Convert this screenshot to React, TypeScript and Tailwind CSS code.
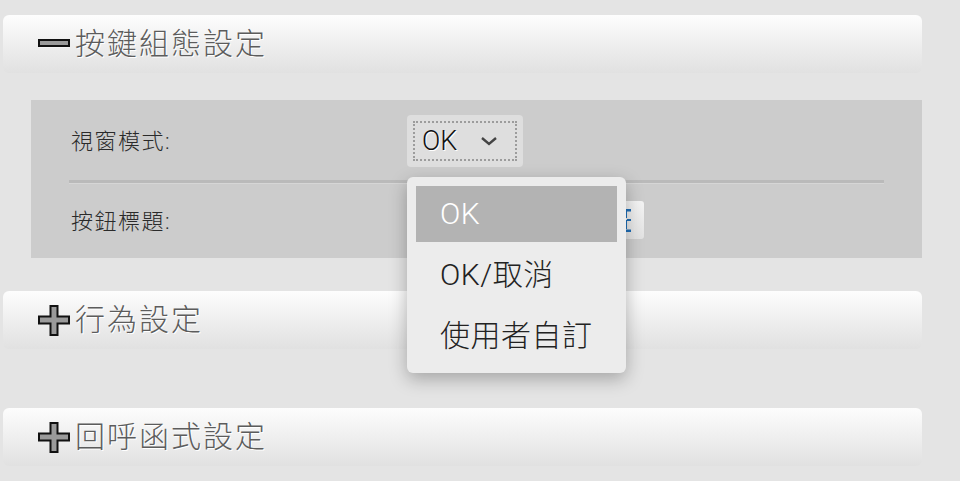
import React from 'react';

const font = 'font-[Roboto,"Noto_Sans_CJK_TC",sans-serif]';

const MinusIcon: React.FC = () => (
  <svg width="33" height="10" viewBox="0 0 33 10" className="shrink-0">
    <rect x="1.5" y="2.5" width="30" height="6" fill="#fff" opacity="0.8" />
    <rect x="1" y="1" width="30" height="6" fill="#9a9a9a" stroke="#111" strokeWidth="2" />
  </svg>
);

const PlusIcon: React.FC = () => (
  <svg width="33" height="33" viewBox="0 0 33 33" className="shrink-0">
    <polygon
      points="12.5,2 19.5,2 19.5,12.5 31,12.5 31,19.5 19.5,19.5 19.5,31 12.5,31 12.5,19.5 1,19.5 1,12.5 12.5,12.5"
      fill="#9a9a9a"
      stroke="#111"
      strokeWidth="2"
    />
  </svg>
);

const SectionHeader: React.FC<{ title: string; open?: boolean; className?: string }> = ({ title, open, className }) => (
  <div
    className={`ml-[3px] w-[919px] h-[58px] rounded-md bg-gradient-to-b from-[#fdfdfd] to-[#e1e1e1] flex items-center pl-[35px] gap-[4px] ${className ?? ''}`}
  >
    {open ? <MinusIcon /> : <PlusIcon />}
    <span className="text-[30px] font-light text-[#5c5c5c] tracking-[2px] leading-none [text-shadow:1px_1px_0_#fff]">
      {title}
    </span>
  </div>
);

const options = ['OK', 'OK/取消', '使用者自訂'];

export default function App() {
  return (
    <div className={`w-[960px] h-[481px] bg-[#e4e4e4] overflow-hidden relative ${font}`}>
      <div className="pt-[15px]">
        <SectionHeader title="按鍵組態設定" open />

        <div className="ml-[31px] mt-[27px] w-[891px] h-[158px] bg-[#cccccc] px-[38px]">
          <div className="h-[80px] flex items-center pl-[2px] pt-[2px]">
            <span className="w-[336px] text-[22px] font-light text-[#2a2a2a] tracking-[1.5px]">視窗模式:</span>
            <div className="w-[116px] h-[52px] rounded-[4px] bg-[#dedede] p-[6px]">
              <div className="h-full border-2 border-dotted border-[#9c9c9c] flex items-center pl-[7px] pr-[17px] justify-between">
                <span className="text-[27px] font-light text-[#111] leading-none [text-shadow:1px_1px_0_#fff]">OK</span>
                <svg width="18" height="10" viewBox="0 0 18 10">
                  <path d="M2 2 L9 8 L16 2" fill="none" stroke="#444" strokeWidth="2.4" />
                </svg>
              </div>
            </div>
          </div>

          <div className="border-t-[3px] border-[#bababa] border-b border-b-[#d6d6d6]" />

          <div className="h-[74px] flex items-center pl-[2px]">
            <span className="w-[336px] text-[22px] font-light text-[#2a2a2a] tracking-[1.5px]">按鈕標題:</span>
            <div className="ml-[183px] w-[54px] h-[38px] mt-[-2px] rounded-[3px] bg-gradient-to-b from-[#f4f4f4] to-[#e2e2e2] flex items-center justify-end pr-[12px]">
              <svg width="7" height="23" viewBox="0 0 7 23">
                <rect x="0" y="0" width="2" height="9" fill="#1f6fb8" />
                <rect x="0" y="11" width="2" height="9" fill="#1f6fb8" />
                <rect x="0" y="0" width="6" height="2.5" fill="#1f6fb8" />
                <rect x="2" y="10" width="4" height="2" fill="#1f6fb8" />
                <rect x="0" y="20.5" width="6" height="2.5" fill="#1f6fb8" />
              </svg>
            </div>
          </div>
        </div>

        <SectionHeader title="行為設定" className="mt-[33px]" />
        <SectionHeader title="回呼函式設定" className="mt-[59px]" />
      </div>

      <div className="absolute left-[407px] top-[177px] w-[219px] rounded-[6px] bg-[#ececec] p-[9px] shadow-[0_6px_18px_rgba(0,0,0,0.28)]">
        {options.map((opt, i) => (
          <div
            key={opt}
            className={`h-[56px] flex items-center pl-[24px] text-[30px] font-light tracking-[0.5px] leading-none ${
              i === 0 ? 'bg-[#b3b3b3] text-white' : 'text-[#222] mt-[5px]'
            }`}
          >
            {opt}
          </div>
        ))}
      </div>
    </div>
  );
}
